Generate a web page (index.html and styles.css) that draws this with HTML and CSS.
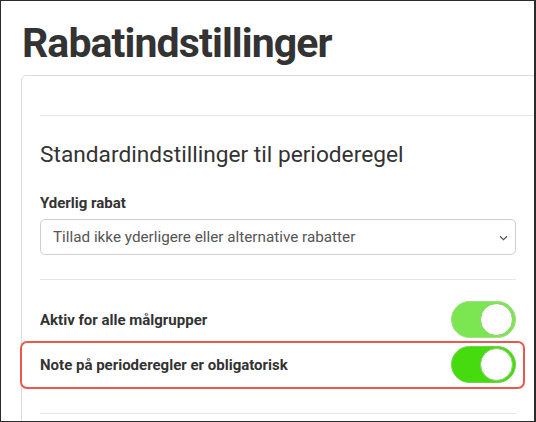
FILE: index.html
```html
<!DOCTYPE html>
<html lang="da">
<head>
<meta charset="utf-8">
<title>Rabatindstillinger</title>
<link rel="stylesheet" href="styles.css">
</head>
<body>
<div class="frame">
  <h1 class="title">Rabatindstillinger</h1>
  <div class="card">
    <div class="card-body">
      <hr class="rule">
      <h2 class="section-title">Standardindstillinger til perioderegel</h2>
      <div class="field-label">Yderlig rabat</div>
      <div class="select">
        <span class="select-text">Tillad ikke yderligere eller alternative rabatter</span>
        <svg class="chevron" width="9" height="6" viewBox="0 0 9 6"><path d="M1 1.2 L4.5 4.6 L8 1.2" fill="none" stroke="#555" stroke-width="1.2"/></svg>
      </div>
      <hr class="rule rule-mid">
      <div class="toggle-row">
        <span class="toggle-label">Aktiv for alle målgrupper</span>
        <span class="toggle toggle-light"><span class="knob"></span></span>
      </div>
      <div class="toggle-row highlighted">
        <span class="toggle-label">Note på perioderegler er obligatorisk</span>
        <span class="toggle toggle-bright"><span class="knob"></span></span>
        <span class="highlight-box"></span>
      </div>
      <hr class="rule rule-bottom">
    </div>
  </div>
</div>
</body>
</html>
```

FILE: styles.css
```css
* { box-sizing: border-box; }
html, body { margin: 0; padding: 0; background: #fff; }
body { font-family: Roboto, "Liberation Sans", Arial, sans-serif; color: #333; }

.frame {
  width: 536px;
  height: 422px;
  border: 1px solid #2b2b2b;
  border-right-width: 2px;
  overflow: hidden;
  background: #fff;
  padding-left: 20px;
}

.title {
  margin: 17px 0 7px 1px;
  font-size: 41px;
  line-height: 50px;
  font-weight: 700;
  color: #333;
  letter-spacing: -0.9px;
}

.card {
  width: 560px;
  border: 1px solid #dcdcdc;
  border-radius: 5px;
  padding: 39px 0 0 18px;
  height: 400px;
}

.card-body { width: 476px; }

.rule {
  border: 0;
  border-top: 1px solid #e6e6e6;
  margin: 0;
  height: 0;
}
.card-body > .rule:first-child { width: 520px; }

.section-title {
  margin: 25px 0 0 0;
  font-size: 22.7px;
  line-height: 28px;
  font-weight: 400;
  color: #333;
}

.field-label {
  margin-top: 24px;
  font-size: 15px;
  line-height: 20px;
  font-weight: 700;
  color: #333;
}

.select {
  margin-top: 6px;
  height: 36px;
  border: 1px solid #cfcfcf;
  border-radius: 5px;
  display: flex;
  align-items: center;
  justify-content: space-between;
  padding: 0 7px 0 12px;
}
.select-text { font-size: 15.25px; color: #555; }
.chevron { margin-top: 1px; }

.rule-mid { margin-top: 24px; }

.toggle-row {
  display: flex;
  align-items: center;
  justify-content: space-between;
  height: 37px;
  margin-top: 21px;
  position: relative;
}
.toggle-row + .toggle-row { margin-top: 8px; }

.toggle-label { font-size: 15px; font-weight: 700; color: #333; }

.toggle {
  width: 65px;
  height: 37px;
  border-radius: 19px;
  display: flex;
  align-items: center;
  justify-content: flex-end;
  padding: 2px;
}
.toggle-light { background: #7be552; border: 1px solid #9fe07f; }
.toggle-bright { background: #45db0e; border: 1px solid #72d34b; }

.knob {
  width: 33px;
  height: 33px;
  border-radius: 50%;
  background: #fff;
  border: 1px solid #84cf66;
}

.highlight-box {
  position: absolute;
  top: -5px;
  bottom: -6px;
  left: -20px;
  right: -9px;
  border: 2px solid #e85a4c;
  border-radius: 7px;
  pointer-events: none;
}

.rule-bottom { margin-top: 30px; }
```
